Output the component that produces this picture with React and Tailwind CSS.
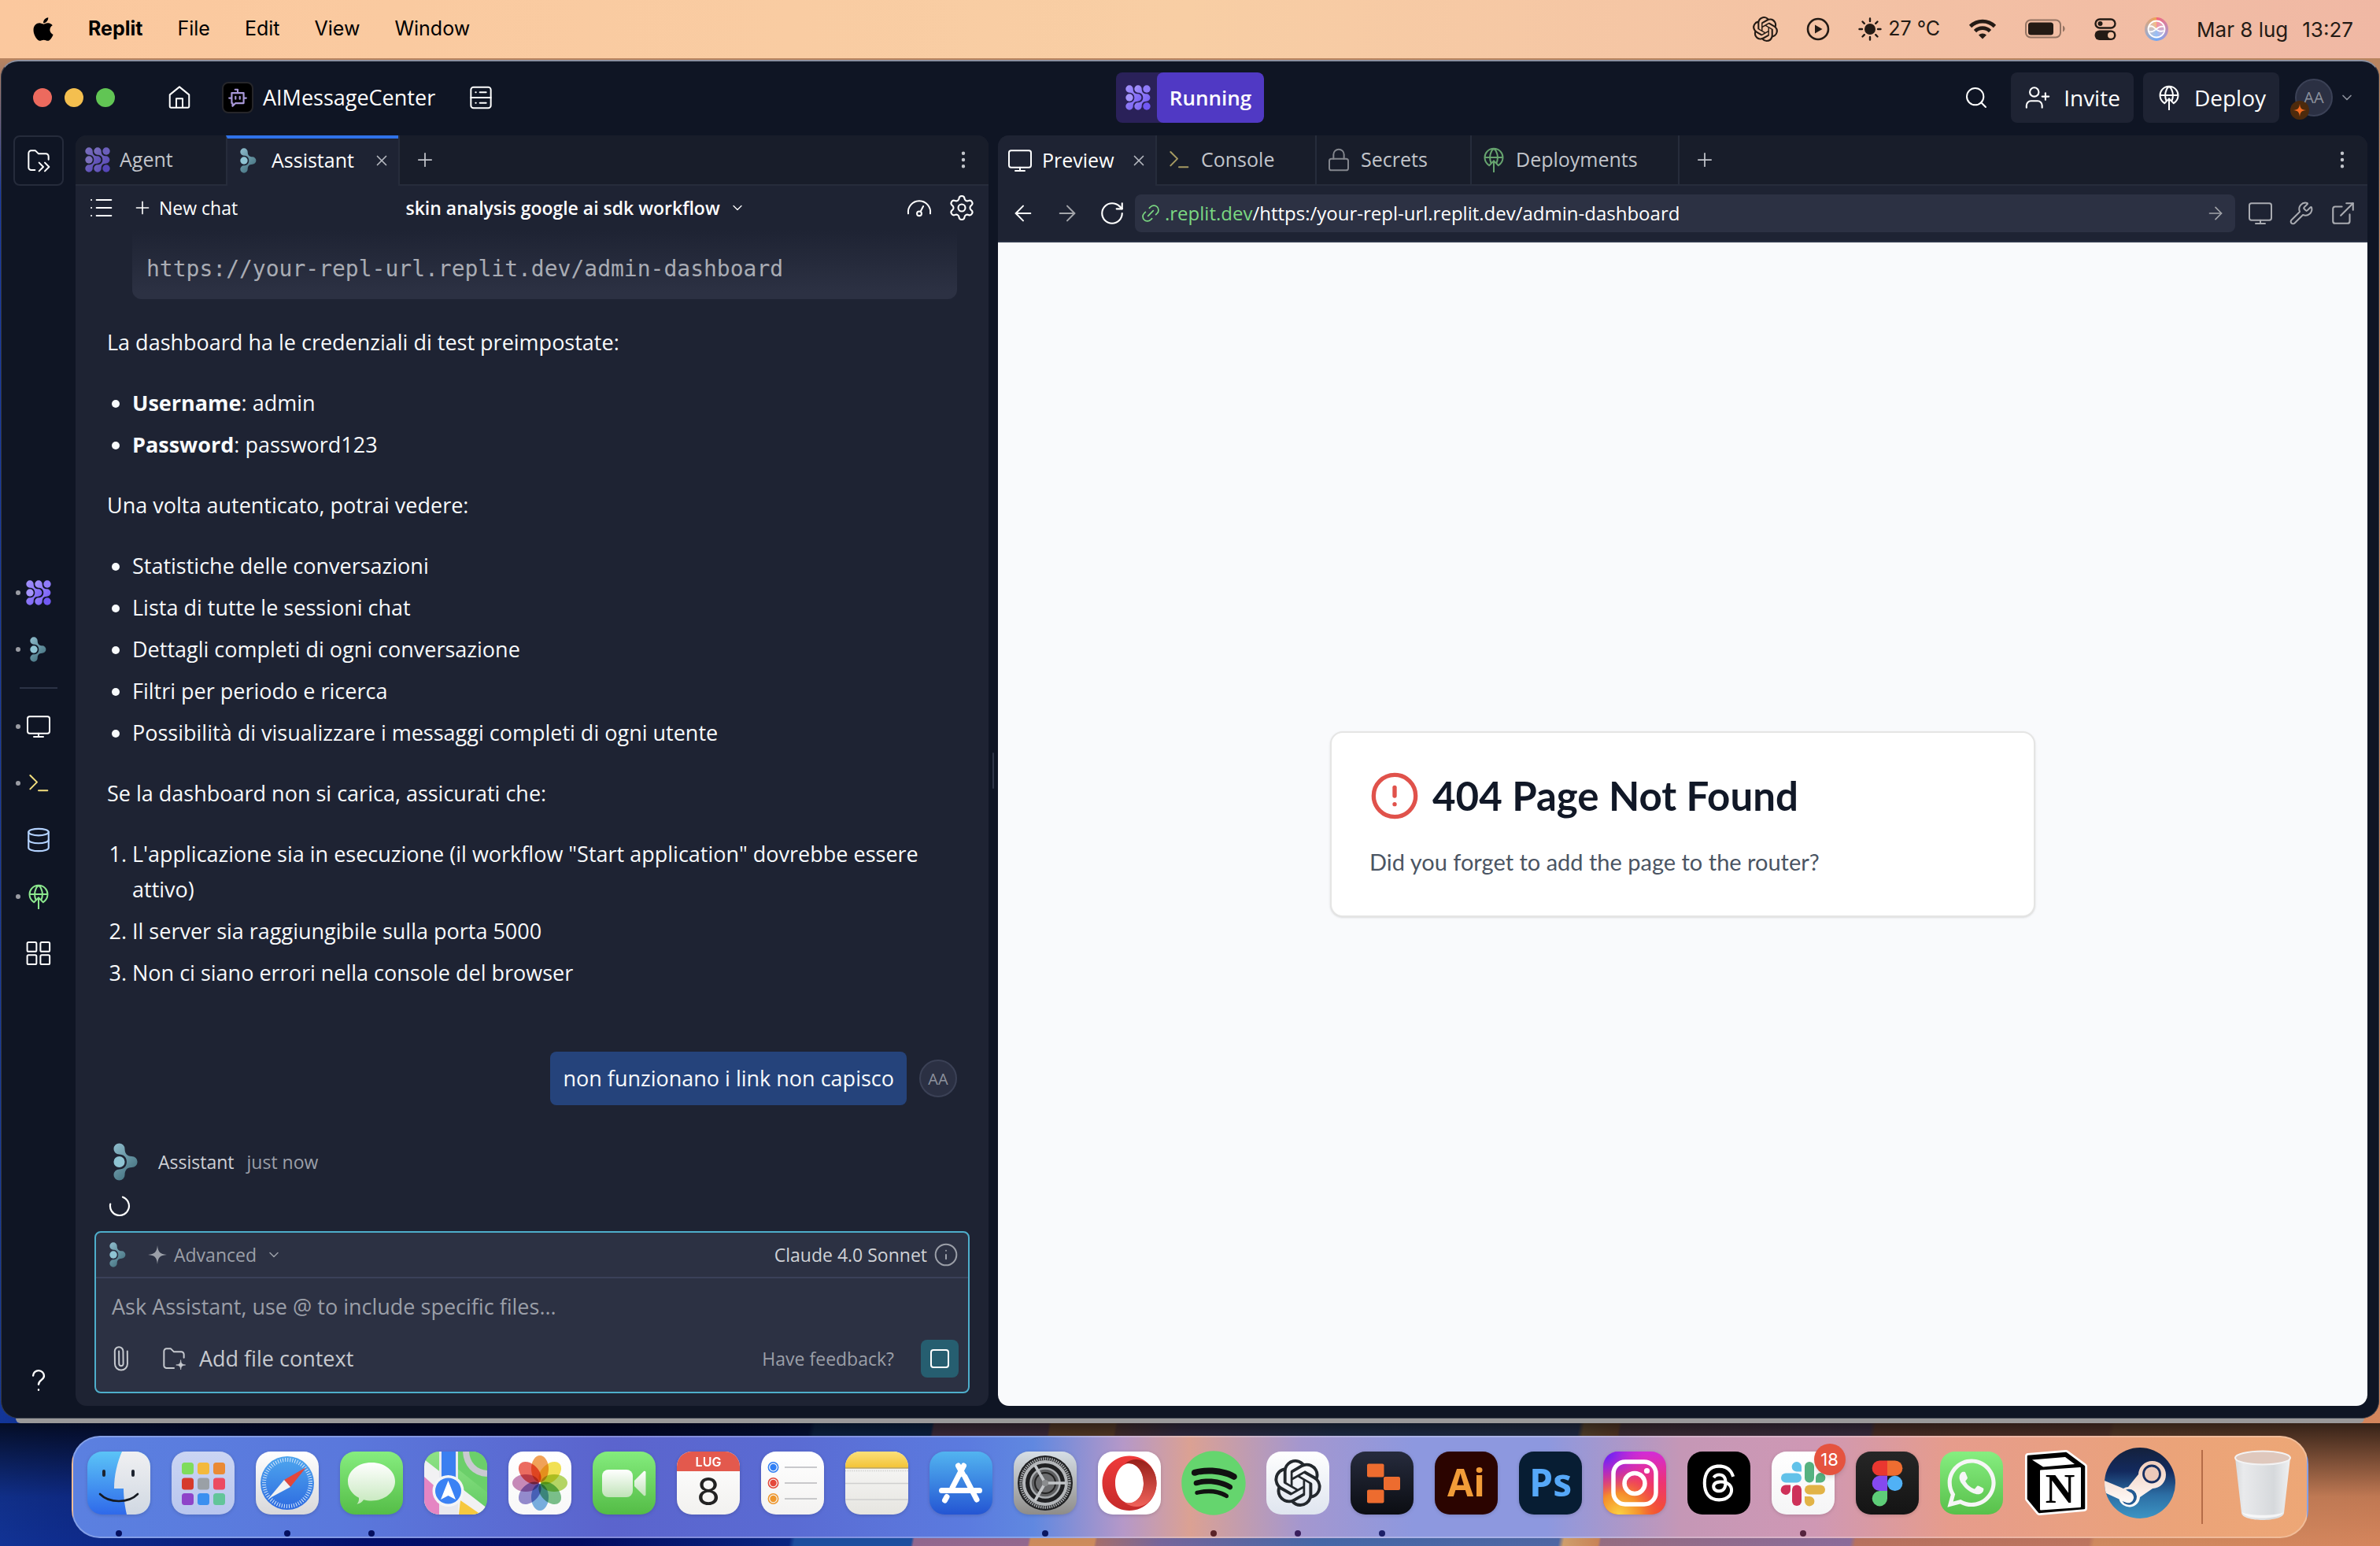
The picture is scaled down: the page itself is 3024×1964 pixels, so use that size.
import React from "react";
import {
  ArrowLeft, ArrowRight, ChevronDown, CircleAlert, Database, ExternalLink, Info, Link2, Lock,
  EllipsisVertical, Paperclip, Plus, RotateCw, Search, Settings, UserPlus, Wrench, X,
} from "lucide-react";
import { FaApple, FaSpotify, FaThreads, FaWhatsapp } from "react-icons/fa6";
import { SiOpenai } from "react-icons/si";

/* ---------- line icons ---------- */

function Line({ size = 32, children, className = "", w = 1.5 }) {
  return (
    <svg width={size} height={size} viewBox="0 0 24 24" fill="none" stroke="currentColor" strokeWidth={w}
      strokeLinecap="round" strokeLinejoin="round" className={"shrink-0 " + className} aria-hidden="true">
      {children}
    </svg>
  );
}

const HomeIcon = () => (
  <Line><path d="M2.8 9.3 12 1.8l9.2 7.5v11.2a1 1 0 0 1-1 1H3.8a1 1 0 0 1-1-1ZM9 21.5V13h6v8.5" /></Line>
);
const ServerIcon = () => (
  <Line><rect x="2.5" y="2" width="19" height="20" rx="2.5" /><path d="M2.5 12h19M7 7h.3M11 7h6M7 17h.3M11 17h6" /></Line>
);
const FilesIcon = () => (
  <Line><path d="M8.500 21H5a2.500 2.500 0 0 1-2.500-2.500V5A2.500 2.500 0 0 1 5 2.500h4l3 3h7A2.500 2.500 0 0 1 21.500 8v3M12.500 14l4 4-4 4M18 14l4 4-4 4" /></Line>
);
const MonitorIcon = ({ size, className }) => (
  <Line size={size} className={className}><rect x="1.500" y="2.500" width="21" height="16" rx="2" /><path d="M12 18.500v3M7.500 21.800h9" /></Line>
);
const TerminalIcon = ({ size, className }) => (
  <Line size={size} className={className}><path d="m4 4.500 6.500 6.500L4 17.500M12 19h8.500" /></Line>
);
const DeployIcon = ({ size, className }) => (
  <Line size={size} className={className}>
    <path d="M6.600 16.600a8.600 8.600 0 1 1 10.800 0M3.400 9.800h17.200M9.200 14.500C7.300 9.500 8.800 3.500 12 1.300c3.200 2.200 4.700 8.200 2.800 13.200M12 23.500V13M7.600 17.400 12 13l4.400 4.400" />
  </Line>
);
const GridIcon = () => (
  <Line><rect x="1.200" y="1.500" width="8.800" height="8.800" rx="1.200" /><rect x="13.800" y="1.500" width="8.800" height="8.800" rx="1.200" /><rect x="1.200" y="13.700" width="8.800" height="8.800" rx="1.200" /><rect x="13.800" y="13.700" width="8.800" height="8.800" rx="1.200" /></Line>
);
const ListIcon = () => (
  <Line><path d="M8 4.500h14M8 12h14M8 19.500h14" /><path d="M3 4.500h.1M3 12h.1M3 19.500h.1" strokeWidth="1.500" /></Line>
);
const GaugeIcon = () => (
  <Line><path d="M1.500 17.500A10.600 10.600 0 1 1 22.500 17.500" /><circle cx="12" cy="17.500" r="2.200" /><path d="m13.200 15.500 2.600-5" /></Line>
);
const FolderSpark = () => (
  <Line><path d="M12 21H5a2.500 2.500 0 0 1-2.500-2.500V5A2.500 2.500 0 0 1 5 2.500h4l3 3h7A2.500 2.500 0 0 1 21.500 8v3" />
    <path d="M18.500 13.500c.4 3.300 1.200 4.100 4.500 4.500-3.300.4-4.100 1.200-4.500 4.500-.4-3.300-1.200-4.100-4.500-4.500 3.300-.4 4.100-1.200 4.500-4.500Z" fill="currentColor" strokeWidth=".5" /></Line>
);
const Spark = ({ size = 28, className = "" }) => (
  <svg width={size} height={size} viewBox="0 0 24 24" fill="currentColor" className={"shrink-0 " + className} aria-hidden="true">
    <path d="M12 1c.8 8 3 10.200 11 11-8 .8-10.200 3-11 11-.8-8-3-10.200-11-11 8-.8 10.200-3 11-11Z" />
  </svg>
);

const CHEVRON =
  "M.3 5a4.700 4.700 0 0 1 9.400 0c0 3.500 1.500 6.300 6 6.300a4.700 4.700 0 0 1 0 9.400c-4.500 0-6 2.800-6 6.300a4.700 4.700 0 0 1-9.400 0 4.700 4.700 0 0 1 4.700-4.700c4 0 6.300-2.600 6.300-6.300s-2.300-6.300-6.300-6.300A4.700 4.700 0 0 1 .3 5Z";

function AgentIcon({ id, size = 32, className = "" }) {
  return (
    <svg width={size} height={size} viewBox="0 0 32 32" className={"shrink-0 " + className} aria-hidden="true">
      <defs>
        <linearGradient id={id} x1="0" y1="0" x2="1" y2="1" gradientUnits="objectBoundingBox">
          <stop offset="0" stopColor="#a594fb" /><stop offset="1" stopColor="#6f56f3" />
        </linearGradient>
      </defs>
      <g fill={"url(#" + id + ")"}>
        <path d={CHEVRON} />
        <path d={CHEVRON} transform="translate(11 0)" />
      </g>
      <g fill="#8f7bf9">
        <circle cx="5" cy="16" r="4.700" fill="#a594fb" />
        <circle cx="27" cy="5" r="4.700" />
        <circle cx="27" cy="27" r="4.700" fill="#7159f4" />
      </g>
    </svg>
  );
}

function AssistantIcon({ id, size = 32, className = "" }) {
  return (
    <svg width={(size * 22) / 32} height={size} viewBox="0 0 22 32" className={"shrink-0 " + className} aria-hidden="true">
      <defs>
        <linearGradient id={id} x1="0" y1="0" x2=".6" y2="1">
          <stop offset="0" stopColor="#8fbdcd" /><stop offset="1" stopColor="#44717f" />
        </linearGradient>
      </defs>
      <path d={CHEVRON} fill={"url(#" + id + ")"} />
      <circle cx="5" cy="16" r="4.700" fill="#8fc4d3" />
    </svg>
  );
}

/* ---------- menu bar ---------- */

function MenuBar() {
  return (
    <header className="flex h-[74px] shrink-0 items-center justify-between bg-linear-to-r from-[#fbc89e] via-[#f8cea4] to-[#f0b8a4] pr-[34px] pl-[38px] font-[Inter,sans-serif] text-[25px] text-black">
      <nav className="flex items-center gap-11">
        <button aria-label="Apple menu" className="-mr-1"><FaApple size={34} /></button>
        <button className="font-bold">Replit</button>
        <button>File</button>
        <button>Edit</button>
        <button>View</button>
        <button>Window</button>
      </nav>
      <div className="flex items-center gap-9 text-[#241b15]">
        <SiOpenai size={32} />
        <svg width="30" height="30" viewBox="0 0 30 30" aria-hidden="true"><circle cx="15" cy="15" r="13" fill="none" stroke="currentColor" strokeWidth="2.600" /><path d="M11 9.500v11l9.500-5.500z" fill="currentColor" /></svg>
        <span className="flex items-center gap-2">
          <svg width="30" height="30" viewBox="0 0 30 30" aria-hidden="true"><circle cx="15" cy="15" r="7" fill="currentColor" /><path d="M15 1.500v3.500M15 25v3.500M1.500 15H5M25 15h3.500M5.500 5.500l2.300 2.300M22.200 22.200l2.300 2.300M5.500 24.500l2.300-2.300M22.200 7.800l2.300-2.300" stroke="currentColor" strokeWidth="2.400" strokeLinecap="round" /></svg>
          27 °C
        </span>
        <svg width="36" height="28" viewBox="0 0 36 28" fill="none" stroke="currentColor" strokeWidth="4.600" aria-hidden="true"><path d="M2.500 10.500a22 22 0 0 1 31 0M8.500 16.600a13.400 13.400 0 0 1 19 0" /><path d="M18 26.500l-5-5a7.200 7.200 0 0 1 10 0z" fill="currentColor" stroke="none" /></svg>
        <svg width="52" height="26" viewBox="0 0 52 26" aria-hidden="true"><rect x="1" y="1.500" width="44" height="22" rx="6" fill="none" stroke="currentColor" strokeOpacity=".45" strokeWidth="2" /><rect x="4" y="4.500" width="32" height="16" rx="3.500" fill="currentColor" /><path d="M48 8.500c3.500 1.500 3.500 6.500 0 8z" fill="currentColor" fillOpacity=".45" /></svg>
        <svg width="28" height="28" viewBox="0 0 28 28" aria-hidden="true"><rect x="1.500" y="1.500" width="25" height="11" rx="5.500" fill="none" stroke="currentColor" strokeWidth="2.400" /><circle cx="7.500" cy="7" r="3" fill="currentColor" /><rect x=".5" y="15.500" width="27" height="12.500" rx="6.200" fill="currentColor" /><circle cx="21" cy="21.700" r="4" fill="#f3c2a3" /></svg>
        <span className="grid size-[30px] place-items-center rounded-full bg-conic from-[#f4637a] via-[#6ea7f5] to-[#f2a14e]">
          <svg width="26" height="26" viewBox="0 0 26 26" fill="none" stroke="#fff" strokeWidth="1.800" aria-hidden="true"><circle cx="13" cy="13" r="10.500" fill="#ffffff44" /><path d="M4 10c6-4 9 9 18 5M4 16c7 3 10-9 18-6" /></svg>
        </span>
        <span className="flex gap-[18px] text-[26px]"><span>Mar 8 lug</span><time>13:27</time></span>
      </div>
    </header>
  );
}

/* ---------- app title bar ---------- */

function TitleBar() {
  return (
    <div className="grid h-[94px] shrink-0 grid-cols-[1fr_auto_1fr] items-center px-[30px] pb-[2px] text-white">
      <div className="flex items-center pl-[10px]">
        <div className="flex gap-4">
          <button aria-label="Close" className="size-6 rounded-full bg-[#ec6a5e]" />
          <button aria-label="Minimise" className="size-6 rounded-full bg-[#f4bf4f]" />
          <button aria-label="Zoom" className="size-6 rounded-full bg-[#61c554]" />
        </div>
        <button aria-label="Home" className="ml-[66px]"><HomeIcon /></button>
        <button className="ml-[38px] flex items-center gap-3 text-[27px] font-medium">
          <span className="grid size-[40px] place-items-center rounded-lg border-2 border-[#26262a] bg-black text-[#a898d8]">
            <Line size={26} w={2}><path d="M5 6.500h14v12H9.500L6 22v-3.500H5ZM12 6.500V2.500H9M2 12.500h3M19 12.500h3M9.500 11v2.500M14.500 11v2.500" /></Line>
          </span>
          AIMessageCenter
        </button>
        <button aria-label="Resources" className="ml-[42px]"><ServerIcon /></button>
      </div>
      <button className="flex h-16 items-stretch overflow-hidden rounded-lg bg-[#2a2159] text-[26px] font-semibold">
        <span className="grid w-[52px] place-items-center pl-1"><AgentIcon id="runAgent" /></span>
        <span className="flex items-center rounded-lg bg-[#5039c4] px-4">Running</span>
      </button>
      <div className="flex items-center justify-end text-[28px] font-medium">
        <button aria-label="Search" className="mr-7"><Search size={32} strokeWidth={1.5} /></button>
        <button className="mr-3 flex h-16 items-center gap-4 rounded-lg bg-[#1e2333] px-[17px]"><UserPlus size={34} strokeWidth={1.500} />Invite</button>
        <button className="mr-5 flex h-16 items-center gap-4 rounded-lg bg-[#1e2333] px-[17px]"><DeployIcon />Deploy</button>
        <button className="relative flex items-center gap-2 text-[#8d929d]" aria-label="Account">
          <span className="grid size-12 place-items-center rounded-full border-2 border-[#3b4156] bg-[#2b3043] text-[20px]">AA</span>
          <span className="absolute -left-[6px] top-[28px] grid size-6 place-items-center rounded-full bg-[#4d2a0c] text-[#f26a21]"><Spark size={18} /></span>
          <ChevronDown size={20} strokeWidth={2} />
        </button>
      </div>
    </div>
  );
}

/* ---------- tool rail ---------- */

const Tool = ({ label, dot = true, children }) => (
  <button aria-label={label} className="relative grid h-[72px] w-full place-items-center">
    {dot && <span className="absolute top-[33px] left-[18px] size-[6px] rounded-full bg-[#9a9ca3]" />}
    {children}
  </button>
);

function Rail() {
  return (
    <aside className="flex w-[94px] shrink-0 flex-col items-center justify-between text-white">
      <button aria-label="Files" className="grid size-16 place-items-center rounded-lg border-2 border-[#252b3b]"><FilesIcon /></button>
      <div className="flex w-full flex-col items-center pt-[6px]">
        <Tool label="Agent"><AgentIcon id="railAgent" /></Tool>
        <Tool label="Assistant"><AssistantIcon id="railAssistant" /></Tool>
        <span className="my-3 h-[2px] w-12 bg-[#2b3245]" />
        <Tool label="Preview"><MonitorIcon /></Tool>
        <Tool label="Console"><TerminalIcon className="text-[#f3df7e]" /></Tool>
        <Tool label="Database" dot={false}><Database size={34} strokeWidth={1.500} className="text-[#b3d2ff]" /></Tool>
        <Tool label="Deployments"><DeployIcon className="text-[#8ce88e]" /></Tool>
        <Tool label="All tools" dot={false}><GridIcon /></Tool>
      </div>
      <button aria-label="Help" className="grid h-16 place-items-center">
        <Line size={32} w={1.8}><path d="M6.800 7.200A5.200 5 0 0 1 17.200 7.500c0 3.800-5.200 4-5.200 8M12 20.500v.4" /></Line>
      </button>
    </aside>
  );
}

/* ---------- assistant panel ---------- */

function Tab({ active, first, width, icon, children }) {
  return (
    <button className={
      "flex h-16 shrink-0 items-center text-[25px] font-medium " + width + " " +
      (active ? "bg-[#1e2333] text-white " : "border-b-2 border-[#262c3b] text-[#c2c5cb] ") +
      (first ? "" : "border-l-2 border-l-[#262c3b]")
    }>
      {icon}
      <span className="ml-3">{children}</span>
      {active && <X size={22} strokeWidth={1.800} className="mr-[10px] ml-auto text-[#b6b9c0]" aria-label="Close tab" />}
    </button>
  );
}

function TabEnd({ ruled }) {
  return (
    <div className={"flex flex-1 items-center justify-between border-b-2 border-[#262c3b] pr-[18px] pl-[18px] text-[#c2c5cb] " + (ruled ? "border-l-2" : "")}>
      <button aria-label="New tab"><Plus size={28} strokeWidth={1.500} /></button>
      <button aria-label="Pane options"><EllipsisVertical size={28} strokeWidth={1.800} /></button>
    </div>
  );
}

function Composer() {
  return (
    <form className="flex flex-col rounded-lg border-2 border-[#4eaecb] bg-[#2c3143]" onSubmit={(e) => e.preventDefault()}>
      <div className="flex h-[58px] items-center border-b-2 border-[#3b4159] pr-3 pl-[17px] text-[23px] text-[#9b9fa8]">
        <AssistantIcon id="composer" />
        <button type="button" className="ml-[26px] flex items-center gap-2"><Spark size={26} />Advanced<ChevronDown size={20} strokeWidth={1.800} className="ml-1" /></button>
        <span className="ml-auto text-[#cfd1d6]">Claude 4.0 Sonnet</span>
        <button type="button" aria-label="Model info" className="ml-2"><Info size={32} strokeWidth={1.500} /></button>
      </div>
      <textarea rows={1} aria-label="Message" placeholder="Ask Assistant, use @ to include specific files..."
        className="h-[68px] resize-none bg-transparent px-5 pt-[14px] text-[27px] leading-[44px] outline-none placeholder:text-[#9b9fa8]" />
      <div className="flex h-[76px] items-center pr-3 pb-2 pl-[15px] text-[#c6c9cf]">
        <button type="button" aria-label="Attach"><Paperclip size={32} strokeWidth={1.500} className="-rotate-45" /></button>
        <button type="button" className="ml-9 flex items-center gap-4 text-[27px]"><FolderSpark />Add file context</button>
        <a href="#feedback" className="ml-auto text-[23px] text-[#9b9fa8]">Have feedback?</a>
        <button type="button" aria-label="Stop" className="ml-[34px] grid size-12 place-items-center rounded-lg bg-[#265e70]"><span className="size-6 rounded border-2 border-white" /></button>
      </div>
    </form>
  );
}

function AssistantPanel() {
  return (
    <section className="flex min-w-0 flex-[2] flex-col overflow-hidden rounded-[14px] bg-[#1e2333]">
      <div className="flex h-16 shrink-0 bg-[#181d2a]">
        <Tab first width="w-[191px] pl-3" icon={<AgentIcon id="tabAgent" className="opacity-70" />}>Agent</Tab>
        <Tab active width="w-[219px] pl-4 border-t-4 border-t-[#2f72e8] pb-1" icon={<AssistantIcon id="tabAssistant" className="mr-[6px]" />}>Assistant</Tab>
        <TabEnd ruled />
      </div>
      <div className="flex h-14 shrink-0 items-center justify-between px-4 text-[23px] text-white">
        <div className="flex items-center gap-6">
          <button aria-label="Chat history"><ListIcon /></button>
          <button className="flex items-center gap-2"><Plus size={26} strokeWidth={1.500} />New chat</button>
        </div>
        <button className="flex items-center gap-3 pl-2 font-semibold">skin analysis google ai sdk workflow<ChevronDown size={20} strokeWidth={1.500} /></button>
        <div className="flex items-center gap-5">
          <button aria-label="Usage"><GaugeIcon /></button>
          <button aria-label="Settings"><Settings size={36} strokeWidth={1.400} /></button>
        </div>
      </div>
      <div className="flex min-h-0 flex-1 flex-col px-10 text-[27px] leading-[45px] text-[#f8fafc]">
        <div className="flex flex-col gap-8">
          <pre className="ml-8 rounded-b-xl bg-linear-to-b from-[#1e2333] to-[#2c3143] to-90% px-[18px] pt-7 pb-4 font-['DejaVu_Sans_Mono',monospace] text-[28px] leading-[44px] text-[#a9acb4]">https://your-repl-url.replit.dev/admin-dashboard</pre>
          <p>La dashboard ha le credenziali di test preimpostate:</p>
          <ul className="flex list-disc flex-col gap-2 pl-8">
            <li><strong>Username</strong>: admin</li>
            <li><strong>Password</strong>: password123</li>
          </ul>
          <p>Una volta autenticato, potrai vedere:</p>
          <ul className="flex list-disc flex-col gap-2 pl-8">
            <li>Statistiche delle conversazioni</li>
            <li>Lista di tutte le sessioni chat</li>
            <li>Dettagli completi di ogni conversazione</li>
            <li>Filtri per periodo e ricerca</li>
            <li>Possibilità di visualizzare i messaggi completi di ogni utente</li>
          </ul>
          <p>Se la dashboard non si carica, assicurati che:</p>
          <ol className="flex list-decimal flex-col gap-2 pl-8">
            <li>L'applicazione sia in esecuzione (il workflow "Start application" dovrebbe essere attivo)</li>
            <li>Il server sia raggiungibile sulla porta 5000</li>
            <li>Non ci siano errori nella console del browser</li>
          </ol>
        </div>
        <div className="mt-auto flex items-center justify-end gap-4">
          <p className="rounded-lg bg-[#25437b] px-4 py-3 leading-[44px]">non funzionano i link non capisco</p>
          <span className="grid size-12 place-items-center rounded-full border-2 border-[#3b4156] bg-[#2b3043] text-[20px] text-[#8d929d]">AA</span>
        </div>
        <div className="mt-12 flex h-12 items-center pl-2 text-[23px]">
          <AssistantIcon id="reply" size={48} />
          <span className="ml-6 text-[#cfd1d6]">Assistant</span>
          <span className="ml-4 text-[#9b9fa8]">just now</span>
        </div>
        <svg width="28" height="28" viewBox="0 0 28 28" className="mt-[18px] mb-[18px] ml-[2px]" aria-label="Loading"><path d="M18 2.700A12 12 0 1 1 2.200 11.500" fill="none" stroke="#fff" strokeWidth="2.200" strokeLinecap="round" /></svg>
      </div>
      <div className="px-6 pb-4"><Composer /></div>
    </section>
  );
}

/* ---------- preview panel ---------- */

function PreviewPanel() {
  return (
    <section className="flex min-w-0 flex-[3] flex-col overflow-hidden rounded-[14px] bg-[#1e2333]">
      <div className="flex h-16 shrink-0 bg-[#181d2a]">
        <Tab first active width="w-[200px] pl-[12px]" icon={<MonitorIcon />}>Preview</Tab>
        <Tab width="w-[203px] pl-[12px]" icon={<TerminalIcon className="text-[#a69b62]" />}>Console</Tab>
        <Tab width="w-[197px] pl-[12px]" icon={<Lock size={32} strokeWidth={1.500} className="text-[#83868d]" />}>Secrets</Tab>
        <Tab width="w-[264px] pl-[12px]" icon={<DeployIcon className="text-[#66a36e]" />}>Deployments</Tab>
        <TabEnd ruled />
      </div>
      <div className="flex h-[72px] shrink-0 items-center border-b-2 border-[#2b3245] pr-[14px] pl-4 text-white">
        <button aria-label="Back"><ArrowLeft size={32} strokeWidth={1.500} /></button>
        <button aria-label="Forward" className="ml-6 text-[#a3a5aa]"><ArrowRight size={32} strokeWidth={1.500} /></button>
        <button aria-label="Reload" className="ml-6"><RotateCw size={34} strokeWidth={1.500} /></button>
        <label className="ml-3 flex h-12 flex-1 items-center rounded-lg bg-[#2c3143] pr-3 pl-[6px] text-[24px]">
          <Link2 size={28} strokeWidth={1.500} className="shrink-0 -rotate-45 text-[#7bd882]" />
          <span className="ml-1 text-[#7bd882]">.replit.dev</span>
          <input aria-label="Address" defaultValue="/https:/your-repl-url.replit.dev/admin-dashboard" className="min-w-0 flex-1 bg-transparent outline-none" />
          <button aria-label="Go" className="text-[#a3a5aa]"><ArrowRight size={26} strokeWidth={1.500} /></button>
        </label>
        <button aria-label="Device size" className="ml-4 text-[#a9abb1]"><MonitorIcon /></button>
        <button aria-label="Devtools" className="ml-5 text-[#a9abb1]"><Wrench size={32} strokeWidth={1.500} /></button>
        <button aria-label="Open in new tab" className="ml-5 text-[#a9abb1]"><ExternalLink size={34} strokeWidth={1.500} /></button>
      </div>
      <main className="grid flex-1 place-items-center bg-[#f9fafc] font-[Lato,sans-serif]">
        <article className="w-full max-w-[896px] rounded-2xl border-2 border-[#e5e5e4] bg-white p-12 shadow-sm">
          <h1 className="flex h-16 items-center gap-4 text-[51px] font-bold text-[#111827]">
            <CircleAlert size={64} strokeWidth={2} className="text-[#e0524b]" />404 Page Not Found
          </h1>
          <p className="mt-8 text-[29px] leading-[40px] text-[#4b5563]">Did you forget to add the page to the router?</p>
        </article>
      </main>
    </section>
  );
}

/* ---------- dock ---------- */

const Grad = ({ id, stops, x2 = 0, y2 = 1 }) => (
  <linearGradient id={id} x1="0" y1="0" x2={x2} y2={y2}>
    {stops.map((c, i) => <stop key={i} offset={i / (stops.length - 1)} stopColor={c} />)}
  </linearGradient>
);

function Tile({ id, stops, children }) {
  return (
    <svg width="80" height="80" viewBox="0 0 80 80" className="overflow-visible drop-shadow-sm" aria-hidden="true">
      <defs>
        <Grad id={id} stops={stops} />
        <clipPath id={id + "c"}><rect width="80" height="80" rx="19" /></clipPath>
      </defs>
      <g clipPath={"url(#" + id + "c)"}>
        <rect width="80" height="80" fill={"url(#" + id + ")"} />
        {children}
      </g>
    </svg>
  );
}

const Finder = () => (
  <Tile id="finder" stops={["#5bc4f7", "#2f69ea"]}>
    <defs><Grad id="finderFace" stops={["#f0f0f2", "#d0d8e2"]} /></defs>
    <path d="M44 0C38 14 34 30 34 47h12c0 12 2 24 4 33h30V0Z" fill="url(#finderFace)" />
    <path d="M21 25v5M58 25v5" stroke="#1d2430" strokeWidth="4" strokeLinecap="round" />
    <path d="M16 54c12 12 36 12 48 0" fill="none" stroke="#151a22" strokeWidth="2.600" strokeLinecap="round" />
  </Tile>
);

const launchColors = ["#7fdc5c", "#f3b93c", "#ea8a35", "#d63a2c", "#9aa0a6", "#ec4b62", "#8e44c9", "#3a8ff0", "#62c59a"];
const Launchpad = () => (
  <Tile id="launch" stops={["#cbd5f3", "#b9c6ee"]}>
    {launchColors.map((c, i) => <rect key={c} x={13 + (i % 3) * 20} y={14 + Math.floor(i / 3) * 19.5} width="15" height="15" rx="3.500" fill={c} />)}
  </Tile>
);

const Safari = () => (
  <Tile id="safari" stops={["#ffffff", "#d8d8da"]}>
    <defs><Grad id="safariDial" stops={["#4ea6ee", "#2e6be0"]} /></defs>
    <circle cx="40" cy="40" r="34" fill="url(#safariDial)" />
    <circle cx="40" cy="40" r="29.500" fill="none" stroke="#d7e8fb" strokeWidth="5" strokeDasharray="1 2.090" />
    <path d="M64 20 36 36l8 9Z" fill="#e2473c" />
    <path d="M16 60 36 36l8 9Z" fill="#f2f2f2" />
  </Tile>
);

const Messages = () => (
  <Tile id="messages" stops={["#86ed7f", "#55bd47"]}>
    <defs><Grad id="msgBubble" stops={["#ffffff", "#c6e8bd"]} /></defs>
    <path d="M40 14c17 0 30 10.500 30 24S57 62.500 40 62.500c-3.500 0-7-.5-10-1.300-2 3-5 5-8.500 5.500 2-2 2.800-5 2.500-8C15.500 54.500 10 46.800 10 38c0-13.500 13-24 30-24Z" fill="url(#msgBubble)" />
  </Tile>
);

const Maps = () => (
  <Tile id="maps" stops={["#8fe287", "#60cb62"]}>
    <path d="M0 10 80 72v8H0Z" fill="#f1f1f3" />
    <path d="M0 32 20 50v30H0Z" fill="#e585c3" />
    <path d="M46 62 72 80H44Z" fill="#f6c83f" />
    <path d="M80 0v52L40 20V0Z" fill="#6bcf6a" />
    <path d="M19 0h24v80H19Z" fill="#e9e9ee" />
    <path d="M22 0h18v50H22Z" fill="#3b7ff0" />
    <path d="M53 0c1 16 11 27 27 28" fill="none" stroke="#c9c9d0" strokeWidth="8" />
    <circle cx="30.500" cy="50" r="20" fill="#f4f5f7" /><circle cx="30.500" cy="50" r="16.500" fill="#3b82f4" />
    <path d="M30.500 37 40 61l-9.500-5-9.500 5Z" fill="#fff" />
  </Tile>
);

const petals = ["#f0933a", "#f1dd35", "#a9d14a", "#65b878", "#62a3de", "#8479c8", "#c076ae", "#ea5245"];
const Photos = () => (
  <Tile id="photos" stops={["#ffffff", "#f8f8f8"]}>
    {petals.map((c, i) => <ellipse key={c} cx="40" cy="22" rx="11" ry="17" fill={c} opacity=".85" transform={"rotate(" + i * 45 + " 40 40)"} style={{ mixBlendMode: "multiply" }} />)}
  </Tile>
);

const FaceTime = () => (
  <Tile id="facetime" stops={["#84ec7d", "#54bc46"]}>
    <defs><Grad id="ftCam" stops={["#ffffff", "#c0e3b8"]} /></defs>
    <rect x="12" y="23" width="39" height="35" rx="8" fill="url(#ftCam)" />
    <path d="M53 37 65 25c1.500-.8 2.500 0 2.500 1.500v28c0 1.500-1 2.300-2.500 1.500L53 44Z" fill="url(#ftCam)" />
  </Tile>
);

const Calendar = () => (
  <Tile id="calendar" stops={["#ffffff", "#f2f1ef"]}>
    <path d="M0 0h80v25H0Z" fill="#e3594d" />
    <text x="40" y="19" textAnchor="middle" fontFamily="Inter" fontSize="16" fontWeight="600" fill="#fff">LUG</text>
    <text x="40" y="68" textAnchor="middle" fontFamily="Inter" fontSize="48" fontWeight="400" fill="#222">8</text>
  </Tile>
);

const Reminders = () => (
  <Tile id="reminders" stops={["#ffffff", "#f3f2f1"]}>
    {["#2f7ff5", "#e4483b", "#ee962c"].map((c, i) => (
      <g key={c}>
        <circle cx="15.500" cy={20 + i * 20} r="6.200" fill="none" stroke={c} strokeWidth="1.500" />
        <circle cx="15.500" cy={20 + i * 20} r="4.200" fill={c} />
        <path d={"M30 " + (20 + i * 20) + "h41"} stroke="#b9b9bd" strokeWidth="1.600" />
      </g>
    ))}
  </Tile>
);

const Notes = () => (
  <Tile id="notes" stops={["#fafafa", "#e6e5e0"]}>
    <defs><Grad id="notesTop" stops={["#fbe07a", "#f3c337"]} /></defs>
    <path d="M0 0h80v20.500H0Z" fill="url(#notesTop)" />
    <path d="M0 21h80" stroke="#9a7d23" strokeWidth="1" />
    <path d="M0 24.500h80" stroke="#c9c9c9" strokeWidth="1.500" strokeDasharray="1.200 1.600" />
    <path d="M0 40.500h80M0 61h80" stroke="#cfcfcf" strokeWidth="1.400" />
  </Tile>
);

const AppStore = () => (
  <Tile id="appstore" stops={["#52b4f0", "#2455d3"]}>
    <g stroke="#fff" strokeWidth="7" strokeLinecap="round">
      <path d="M43.500 18 29 46" /><path d="M36.500 18l6 11M45 32l15 29" /><path d="M15.500 49.500h48" /><path d="M22 57.500l-2.500 4.500" />
    </g>
  </Tile>
);

const SystemSettings = () => (
  <Tile id="settings" stops={["#d6dee5", "#8e8c89"]}>
    <circle cx="40" cy="40" r="35" fill="#1f2022" />
    <circle cx="40" cy="40" r="31" fill="none" stroke="#a4a7aa" strokeWidth="3.500" strokeDasharray="1.600 1.200" />
    <circle cx="40" cy="40" r="27" fill="none" stroke="#b4b7ba" strokeWidth="4" />
    <circle cx="40" cy="40" r="18.500" fill="#5e5f61" stroke="#a9acaf" strokeWidth="2.500" />
    <circle cx="40" cy="40" r="13" fill="#6b6c6e" stroke="#222" strokeWidth="2" />
    <path d="M40 40h26M40 40 27 17.500M40 40 27 62.500" stroke="#c2c5c8" strokeWidth="3.500" />
    <circle cx="40" cy="40" r="4" fill="#8a8c8e" />
  </Tile>
);

const Opera = () => (
  <Tile id="opera" stops={["#ffffff", "#ffffff"]}>
    <defs><Grad id="operaO" stops={["#ef3a3a", "#c52b2b"]} /><Grad id="operaR" stops={["#96201a", "#f0625a"]} /></defs>
    <path d="M40 5.500c-19.500 0-34.500 15.500-34.500 34.700S20.500 75 40 75s34.500-15.600 34.500-34.800S59.500 5.500 40 5.500Zm0 9.500c10 0 18 11.200 18 25.200S50 65.500 40 65.500 22 54.200 22 40.200 30 15 40 15Z" fill="url(#operaO)" />
    <path d="M34 15.500C45 7 56 9.500 63.500 15.500 70.500 21.800 74.500 30.500 74.500 40.200S70.500 58.500 63.500 65C55 71.500 44 72 34 65c14 3 24-9 24-24.800S48 12.500 34 15.500Z" fill="url(#operaR)" />
  </Tile>
);

const Spotify = () => (
  <span className="relative grid size-[84px] place-items-center"><span className="absolute inset-2 rounded-full bg-[#111]" /><FaSpotify size={84} color="#65d56e" className="relative" /></span>
);

const ChatGPT = () => (
  <span className="grid size-20 place-items-center rounded-[19px] bg-linear-to-b from-white to-[#dfe5ef] text-[#23282d]"><SiOpenai size={60} /></span>
);

const ReplitApp = () => (
  <Tile id="replit" stops={["#262b3d", "#0b0d12"]}>
    <rect x="21" y="15.500" width="21.500" height="17" rx="2" fill="#ed6c2f" /><rect x="42" y="32" width="21" height="17" rx="2" fill="#ed6c2f" /><rect x="21" y="48.500" width="21.500" height="17" rx="2" fill="#ed6c2f" />
  </Tile>
);

const Adobe = ({ id, bg, color, children }) => (
  <Tile id={id} stops={[bg, bg]}>
    <text x="40" y="57" textAnchor="middle" fontFamily="Open Sans" fontSize="48" fontWeight="700" fill={color}>{children}</text>
  </Tile>
);

const Instagram = () => (
  <Tile id="insta" stops={["#d32bd8", "#ee3472", "#f4532c"]}>
    <defs>
      <radialGradient id="igY" cx=".25" cy="1" r=".75"><stop offset="0" stopColor="#fbd141" /><stop offset=".45" stopColor="#f58f2c" /><stop offset="1" stopColor="#f0403a" stopOpacity="0" /></radialGradient>
      <radialGradient id="igB" cx="0" cy="0" r=".7"><stop offset="0" stopColor="#4a20ff" /><stop offset="1" stopColor="#c42bd8" stopOpacity="0" /></radialGradient>
    </defs>
    <rect width="80" height="80" fill="url(#igY)" /><rect width="80" height="80" fill="url(#igB)" />
    <g fill="none" stroke="#fff" strokeWidth="5.500"><rect x="13" y="13" width="54" height="54" rx="15" /><circle cx="40" cy="40.500" r="13" /></g>
    <circle cx="55.500" cy="24.500" r="3.600" fill="#fff" />
  </Tile>
);

const Threads = () => (
  <span className="grid size-20 place-items-center rounded-[19px] bg-black text-white"><FaThreads size={50} /></span>
);

const Slack = () => (
  <span className="relative">
    <Tile id="slack" stops={["#ffffff", "#f5f5f6"]}>
      <g fill="#62c2e9"><path d="M38 25.500h-6a6.200 6.200 0 1 1 6-6Z" /><rect x="12" y="27.500" width="26" height="12" rx="6" /></g>
      <g fill="#56b280"><rect x="42" y="13" width="12" height="26.500" rx="6" /><path d="M56 39.500v-6a6.200 6.200 0 1 1 6 6Z" /></g>
      <g fill="#ce3159"><path d="M24 42.500v6a6.200 6.200 0 1 1-6-6Z" /><rect x="26" y="42.500" width="12" height="26.500" rx="6" /></g>
      <g fill="#e2b347"><rect x="42" y="42.500" width="26" height="12" rx="6" /><path d="M42 57h6a6.200 6.200 0 1 1-6 6Z" /></g>
    </Tile>
    <span className="absolute -top-[10px] -right-[14px] grid size-10 place-items-center rounded-full bg-[#e5533f] font-[Inter,sans-serif] text-[22px] text-white shadow-md">18</span>
  </span>
);

const Figma = () => (
  <Tile id="figma" stops={["#262626", "#141414"]}>
    <path d="M40 11.500v19.300h-9.700a9.650 9.650 0 0 1 0-19.300Z" fill="#ea3730" />
    <path d="M40 11.500h9.700a9.650 9.650 0 0 1 0 19.300H40Z" fill="#ee6d31" />
    <path d="M40 30.800v19.300h-9.700a9.650 9.650 0 0 1 0-19.300Z" fill="#8549ef" />
    <circle cx="49.700" cy="40.450" r="9.650" fill="#50b1f6" />
    <path d="M40 50.100v9.700a9.650 9.650 0 1 1-9.700-9.700Z" fill="#5ecd78" />
  </Tile>
);

const WhatsApp = () => (
  <span className="grid size-20 place-items-center rounded-[19px] bg-linear-to-b from-[#86ee80] to-[#58c04a] text-[#f6f6f6]"><FaWhatsapp size={70} /></span>
);

const Notion = () => (
  <svg width="80" height="84" viewBox="0 0 80 84" aria-hidden="true">
    <path d="M5 8 53 4l23 17v53l-57 5L5 62Z" fill="#000" stroke="#fff" strokeWidth="8" strokeLinejoin="round" />
    <path d="M5 8 53 4l23 17v53l-57 5L5 62Z" fill="#000" stroke="#000" strokeWidth="2.500" strokeLinejoin="round" />
    <path d="M10 12.500 52 9l12 9-40 3.500Z" fill="#fff" />
    <path d="M21 26.500 71 23v49l-50 3.500Z" fill="#fff" stroke="#fff" strokeWidth="2" strokeLinejoin="round" />
    <text x="45.500" y="67" textAnchor="middle" fontFamily="Liberation Serif" fontSize="52" fontWeight="700" fill="#000">N</text>
  </svg>
);

const Steam = () => (
  <svg width="90" height="90" viewBox="0 0 90 90" aria-hidden="true">
    <defs>
      <Grad id="steamBg" stops={["#14213c", "#132a5e", "#2c6ea4", "#3d95c4"]} />
      <Grad id="steamFg" stops={["#f2cdbb", "#ffffff"]} />
      <clipPath id="steamClip"><circle cx="45" cy="45" r="45" /></clipPath>
    </defs>
    <g clipPath="url(#steamClip)">
      <rect width="90" height="90" fill="url(#steamBg)" />
      <path d="M0 42 24 52a13 13 0 0 1 6-2L43 34a17.500 17.500 0 1 1 18 18L45 63a13.500 13.500 0 0 1-26.500 2.500L0 57Z" fill="url(#steamFg)" />
      <circle cx="60" cy="33.500" r="10.500" fill="#edc9ba" stroke="#172f62" strokeWidth="2.800" />
      <path d="M27 53.500a10 10 0 1 1-4.500 14.500l5.500 2a7 7 0 1 0 4-13.500Z" fill="#235a92" />
    </g>
  </svg>
);

const Trash = () => (
  <svg width="74" height="92" viewBox="0 0 74 92" aria-hidden="true">
    <defs>
      <linearGradient id="binBody"><stop offset="0" stopColor="#d8dadc" /><stop offset=".15" stopColor="#e9eaec" /><stop offset=".7" stopColor="#d6d9dc" /><stop offset="1" stopColor="#f0f1f2" /></linearGradient>
    </defs>
    <path d="M2 11 10 81c1 12 53 12 54 0L72 11Z" fill="url(#binBody)" />
    <ellipse cx="37" cy="11" rx="35" ry="8.500" fill="#dfc8bd" stroke="#f3f3f4" strokeWidth="2" />
    <path d="M11 80c6 5 46 5 52 0-2 10-50 10-52 0Z" fill="#fff" opacity=".7" />
  </svg>
);

const apps = [
  ["Finder", Finder, "#05105f"], ["Launchpad", Launchpad], ["Safari", Safari, "#05105f"], ["Messages", Messages, "#05105f"],
  ["Maps", Maps], ["Photos", Photos], ["FaceTime", FaceTime], ["Calendar", Calendar], ["Reminders", Reminders], ["Notes", Notes],
  ["App Store", AppStore], ["System Settings", SystemSettings, "#0a1660"], ["Opera", Opera], ["Spotify", Spotify, "#5a2428"],
  ["ChatGPT", ChatGPT, "#3a1f5c"], ["Replit", ReplitApp, "#1c2068"],
  ["Illustrator", () => <Adobe id="ai" bg="#2b0400" color="#f29c38">Ai</Adobe>],
  ["Photoshop", () => <Adobe id="ps" bg="#071d33" color="#56a8f8">Ps</Adobe>],
  ["Instagram", Instagram], ["Threads", Threads], ["Slack", Slack, "#54233e"], ["Figma", Figma], ["WhatsApp", WhatsApp],
  ["Notion", Notion], ["Steam", Steam],
];

function Dock() {
  return (
    <footer className="flex h-[156px] shrink-0 justify-center bg-linear-to-b from-black/75 via-black/10 via-60% to-transparent pt-4 pb-[10px]">
      <div className="flex items-center rounded-[36px] border-2 border-white/25 bg-[linear-gradient(90deg,#5b80e0_0%,#5a78dc_12%,#5b64cd_24%,#5a6bd3_32%,#5b7bdf_40%,#6088e0_43%,#b598c8_47%,#dba193_50%,#a497cf_55%,#8d98df_60%,#8d98df_66%,#c597b6_72%,#cf98b4_78%,#e69c8c_84%,#eba379_94%,#eda776_100%)] pr-[19px] pl-[4px]">
        {apps.map(([name, Icon, dot]) => (
          <button key={name} aria-label={name} className="relative grid h-[126px] w-[107px] place-items-center pb-[10px]">
            <Icon />
            {dot && <span className="absolute bottom-0 left-[50px] size-2 rounded-full" style={{ backgroundColor: dot }} />}
          </button>
        ))}
        <span className="mx-[25px] h-[94px] w-[2px] bg-[#b56c47]" />
        <button aria-label="Trash" className="ml-[14px] pb-1"><Trash /></button>
      </div>
    </footer>
  );
}

/* ---------- desktop ---------- */

export default function App() {
  return (
    <div className="flex h-screen flex-col overflow-hidden bg-[linear-gradient(100deg,#1638a8_0%,#14399c_8%,#030f6c_24%,#020b60_32%,#0a2580_40%,#1d4f9f_40.2%,#1d4f9f_44.6%,#93688f_44.7%,#93688f_49%,#cd8c5d_49.1%,#cd8c5d_51.5%,#a56f6d_51.600%,#76669c_54%,#4668a8_60%,#4f67a4_69%,#d09f6c_69.2%,#c98458_70.5%,#966d82_70.600%,#8b6c9b_80%,#b8725f_80.2%,#bd7560_89%,#cf8a60_89.2%,#d5855c_100%)] font-['Open_Sans',sans-serif]">
      <MenuBar />
      <div className="flex min-h-0 flex-1 flex-col bg-linear-to-b from-[#b98560] to-transparent to-10% px-px pt-[2px]">
        <div className="flex min-h-0 flex-1 flex-col rounded-[22px] border border-t-2 border-[#343a47] border-t-[#8b90a0] bg-[#0f1524]">
          <TitleBar />
          <div className="flex min-h-0 flex-1 pr-[14px] pb-[15px]">
            <Rail />
            <AssistantPanel />
            <div role="separator" className="flex w-3 shrink-0 items-center justify-center"><span className="h-[46px] w-[2px] rounded bg-[#2f3548]" /></div>
            <PreviewPanel />
          </div>
        </div>
      </div>
      <div className="mx-5 h-[6px] shrink-0 rounded-b-lg bg-[#9a999a]" />
      <Dock />
    </div>
  );
}
